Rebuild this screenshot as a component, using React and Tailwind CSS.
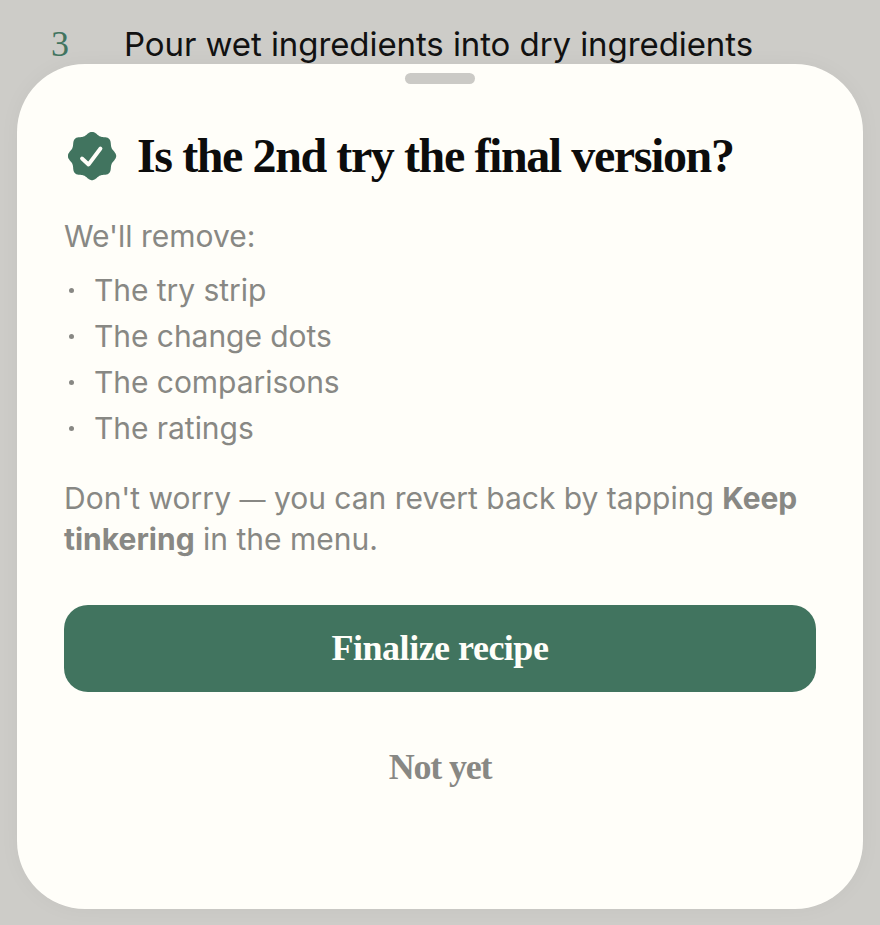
const badge = (() => {
  const pts = [];
  for (let i = 0; i < 240; i++) {
    const t = (i / 240) * Math.PI * 2;
    const r = 21.2 + 3 * Math.pow((1 + Math.cos(8 * t)) / 2, 1.1);
    pts.push(`${(24 + r * Math.cos(t)).toFixed(2)} ${(24 + r * Math.sin(t)).toFixed(2)}`);
  }
  return "M" + pts.join("L") + "Z";
})();

export default function App() {
  const sans = "font-['Inter','Liberation_Sans',sans-serif]";
  const serif = "font-['Liberation_Serif','Times_New_Roman',serif]";
  const items = ["The try strip", "The change dots", "The comparisons", "The ratings"];
  return (
    <div className={`h-[925px] w-[880px] overflow-hidden bg-[#cdccc8] ${sans}`}>
      <div className="flex h-[64px] items-start overflow-hidden pl-[51px] pt-[24px]">
        <span className={`w-[73px] text-[36px] leading-[40px] text-[#41745f] ${serif}`}>3</span>
        <span className="text-[33px] leading-[40px] tracking-[-0.08px] text-[#111111]">Pour wet ingredients into dry ingredients</span>
      </div>
      <div className="mx-[17px] flex h-[845px] flex-col rounded-[68px] bg-[#fffef9] px-[47px] shadow-[0_0_22px_rgba(0,0,0,0.035)]">
        <div className="mx-auto mt-[9px] h-[11px] w-[70px] rounded-full bg-[#cbcac6]" />
        <div className="mt-[44px] flex items-center gap-[20px] pl-[4px]">
          <svg width="49" height="49" viewBox="0 0 49 49" className="shrink-0">
            <path fill="#41745f" d={badge} />
            <path fill="none" stroke="#fffef9" strokeWidth="3.8" strokeLinecap="round" strokeLinejoin="round" d="M14 26.5 L20.5 32.5 L32.5 16.5" />
          </svg>
          <h1 className={`text-[48px] font-bold leading-[56px] tracking-[-1.4px] whitespace-nowrap text-[#0c0c0c] ${serif}`}>Is the 2nd try the final version?</h1>
        </div>
        <p className="mt-[32px] text-[30px] leading-[40px] text-[#888884]">We'll remove:</p>
        <ul className="mt-[11px] flex flex-col text-[30px] leading-[46px] tracking-[-0.05px] text-[#888884]">
          {items.map((t) => (
            <li key={t} className="flex items-center">
              <span className="ml-[5px] mr-[21px] h-[5px] w-[5px] rounded-full bg-[#888884]" />
              <span className="-ml-[1px]">{t}</span>
            </li>
          ))}
        </ul>
        <p className="mt-[27px] text-[30px] leading-[41px] text-[#888884]">
          Don't worry <span className="text-[26px] leading-none">—</span> you can revert back by tapping <b className="font-bold">Keep tinkering</b> in the menu.
        </p>
        <button className={`mt-[45px] flex h-[87px] w-full items-center justify-center rounded-[24px] bg-[#41745f] pb-[2px] text-[36px] font-bold tracking-[-0.5px] text-[#fffef9] ${serif}`}>Finalize recipe</button>
        <button className={`mt-[53px] text-center text-[36px] font-bold leading-[44px] tracking-[-1.2px] text-[#888884] ${serif}`}>Not yet</button>
      </div>
    </div>
  );
}
